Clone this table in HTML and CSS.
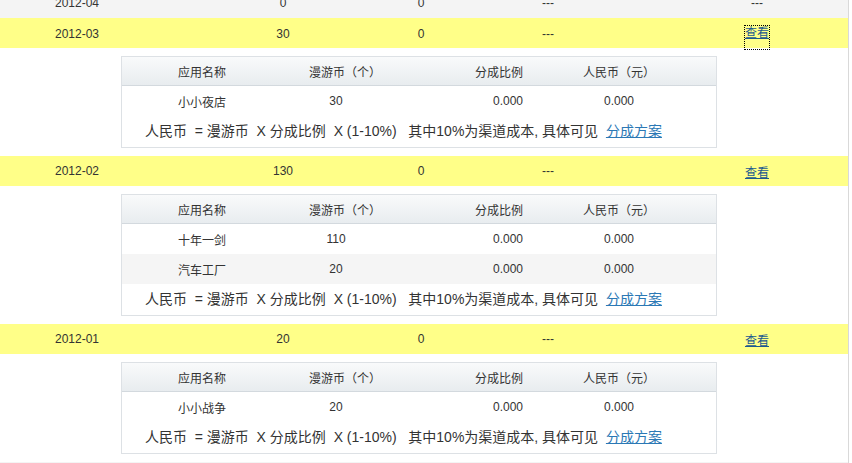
FILE: index.html
```html
<!DOCTYPE html>
<html lang="zh-CN">
<head>
<meta charset="utf-8">
<title>分成明细</title>
<link rel="stylesheet" href="styles.css">
</head>
<body>
<div class="list">
  <div class="mrow gray">
    <span>2012-04</span><span>0</span><span>0</span><span>---</span><span>---</span>
  </div>

  <div class="mrow yellow">
    <span>2012-03</span><span>30</span><span>0</span><span>---</span><span><a href="#" class="view focused">查看</a></span>
  </div>
  <div class="detail">
    <div class="sub">
      <div class="srow head">
        <span class="c1">应用名称</span><span class="c2">漫游币（个）</span><span class="c3">分成比例</span><span class="c4">人民币（元）</span>
      </div>
      <div class="srow body">
        <span class="c1">小小夜店</span><span class="c2">30</span><span class="c3">0.000</span><span class="c4">0.000</span>
      </div>
      <div class="foot">人民币 &nbsp;= 漫游币 &nbsp;X 分成比例 &nbsp;X (1-10%) &nbsp;&nbsp;其中10%为渠道成本, 具体可见 &nbsp;<a href="#" class="plan">分成方案</a></div>
    </div>
  </div>

  <div class="mrow yellow">
    <span>2012-02</span><span>130</span><span>0</span><span>---</span><span><a href="#" class="view">查看</a></span>
  </div>
  <div class="detail">
    <div class="sub">
      <div class="srow head">
        <span class="c1">应用名称</span><span class="c2">漫游币（个）</span><span class="c3">分成比例</span><span class="c4">人民币（元）</span>
      </div>
      <div class="srow body">
        <span class="c1">十年一剑</span><span class="c2">110</span><span class="c3">0.000</span><span class="c4">0.000</span>
      </div>
      <div class="srow body alt">
        <span class="c1">汽车工厂</span><span class="c2">20</span><span class="c3">0.000</span><span class="c4">0.000</span>
      </div>
      <div class="foot">人民币 &nbsp;= 漫游币 &nbsp;X 分成比例 &nbsp;X (1-10%) &nbsp;&nbsp;其中10%为渠道成本, 具体可见 &nbsp;<a href="#" class="plan">分成方案</a></div>
    </div>
  </div>

  <div class="mrow yellow">
    <span>2012-01</span><span>20</span><span>0</span><span>---</span><span><a href="#" class="view">查看</a></span>
  </div>
  <div class="detail">
    <div class="sub">
      <div class="srow head">
        <span class="c1">应用名称</span><span class="c2">漫游币（个）</span><span class="c3">分成比例</span><span class="c4">人民币（元）</span>
      </div>
      <div class="srow body">
        <span class="c1">小小战争</span><span class="c2">20</span><span class="c3">0.000</span><span class="c4">0.000</span>
      </div>
      <div class="foot">人民币 &nbsp;= 漫游币 &nbsp;X 分成比例 &nbsp;X (1-10%) &nbsp;&nbsp;其中10%为渠道成本, 具体可见 &nbsp;<a href="#" class="plan">分成方案</a></div>
    </div>
  </div>

  <div class="mrow gray">
    <span>2011-12</span><span>0</span><span>0</span><span>---</span><span>---</span>
  </div>
</div>
</body>
</html>
```

FILE: styles.css
```css
html, body {
  margin: 0;
  padding: 0;
  background: #ffffff;
  overflow: hidden;
}

body {
  font-family: "Liberation Sans", Arial, "Noto Sans CJK SC", sans-serif;
  font-size: 12px;
  color: #333333;
}

.list {
  width: 848px;
  border-right: 1px solid #d9d9d9;
  margin-top: -12px;
}

.mrow {
  display: grid;
  grid-template-columns: 154px 258px 18px 236px 182px;
  height: 30px;
  align-items: center;
  text-align: center;
}

.mrow.gray {
  background: #f4f4f4;
}

.mrow.yellow {
  background: #ffff88;
}

.view {
  color: #1d5a8e;
  text-decoration: underline;
}

.view.focused {
  display: inline-block;
  outline: 1px dotted #000000;
  line-height: 14px;
  padding-bottom: 9px;
  margin-top: 8px;
}

.detail {
  padding: 8px 0 8px 121px;
}

.sub {
  width: 594px;
  border: 1px solid #dde1e5;
  background: #ffffff;
}

.srow {
  display: grid;
  grid-template-columns: 160px 116px 164px 154px;
  align-items: center;
}

.srow.head {
  height: 28px;
  border-bottom: 1px solid #d3d9de;
  background: linear-gradient(#f9fafb, #e8ecef);
}

.srow.body {
  height: 30px;
}

.srow.alt {
  background: #f5f5f5;
}

.c1 {
  text-align: center;
}

.c2 {
  text-align: center;
}

.head .c2 {
  padding-left: 10px;
}

.head .c3 {
  padding-left: 77px;
}

.head .c4 {
  padding-left: 21px;
}

.body .c2 {
  padding-right: 8px;
}

.body .c3 {
  padding-left: 95px;
}

.body .c4 {
  padding-left: 42px;
}

.foot {
  height: 31px;
  line-height: 31px;
  padding-left: 23px;
  font-size: 14px;
  white-space: nowrap;
}

.plan {
  color: #2b78b5;
  text-decoration: underline;
}
```
